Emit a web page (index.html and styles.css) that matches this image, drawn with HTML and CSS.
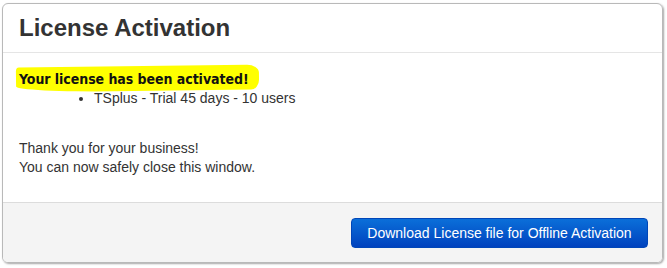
FILE: index.html
```html
<!DOCTYPE html>
<html>
<head>
<meta charset="utf-8">
<link rel="stylesheet" href="styles.css">
</head>
<body>
<div class="card">
  <div class="card-header"><h1 class="title">License Activation</h1></div>
  <div class="card-body">
    <p class="activated"><span class="marker">Your license has been activated!</span></p>
    <ul class="licenses"><li>TSplus - Trial 45 days - 10 users</li></ul>
    <p class="thanks">Thank you for your business!<br>You can now safely close this window.</p>
  </div>
  <div class="card-footer">
    <button class="btn-primary">Download License file for Offline Activation</button>
  </div>
</div>
</body>
</html>
```
FILE: styles.css
```css
html, body { margin: 0; padding: 0; background: #fff; }
body { padding: 3px 4px 5px 2px; font-family: "Liberation Sans", Arial, sans-serif; font-size: 14px; color: #333; }
.card {
  height: 258px;
  border: 1px solid #b9b9b9;
  border-radius: 6px;
  box-shadow: 1px 1px 2px rgba(0,0,0,0.35);
  display: flex;
  flex-direction: column;
  overflow: hidden;
}
.card-header { height: 48px; border-bottom: 1px solid #e5e5e5; padding: 0 16px; display: flex; align-items: center; }
.title { margin: 0; font-size: 24px; font-weight: bold; color: #333; }
.card-body { flex: 1; padding: 16px 16px 0; }
.activated { margin: 0; line-height: 20px; }
.marker {
  position: relative;
  z-index: 0;
  font-family: "DejaVu Sans", Verdana, sans-serif;
  font-stretch: condensed;
  font-weight: bold;
  font-size: 14px;
  letter-spacing: -0.05px;
  color: #111;
}
.marker::before {
  content: "";
  position: absolute;
  z-index: -1;
  left: -3px;
  right: -10px;
  top: -5px;
  bottom: -4px;
  background: #ffff00;
  border-radius: 3px 12px 8px 40% / 4px 8px 10px 6px;
  transform: rotate(-0.7deg);
}
.licenses { margin: 0; padding-left: 75px; line-height: 18px; }
.thanks { margin: 32px 0 0; line-height: 19px; }
.card-footer { height: 59px; background: #f4f4f4; border-top: 1px solid #dcdcdc; display: flex; justify-content: flex-end; align-items: center; padding: 0 14px; }
.btn-primary {
  width: 297px; height: 30px;
  border: 1px solid #0046b8;
  border-radius: 4px;
  background: linear-gradient(#0b6fd9, #0042be);
  color: #fff;
  font-family: "Liberation Sans", Arial, sans-serif;
  font-size: 14px;
  padding: 0;
}
```
